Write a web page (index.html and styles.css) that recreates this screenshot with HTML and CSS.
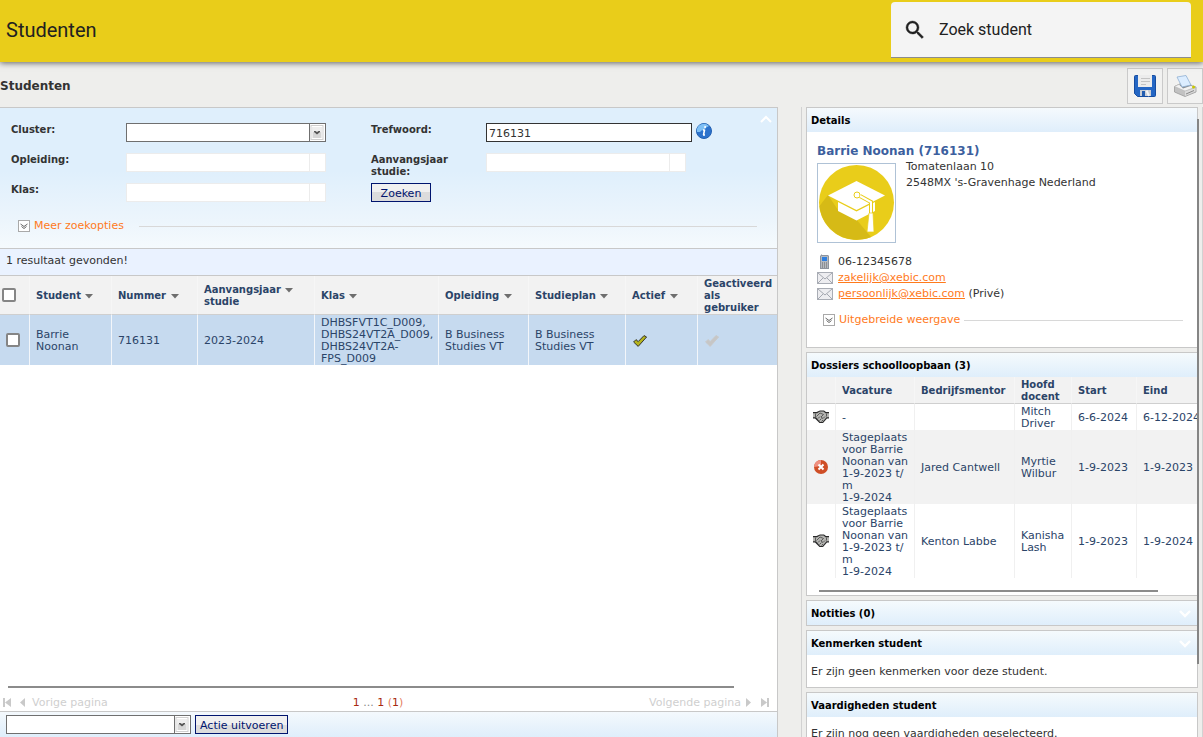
FILE: index.html
```html
<!DOCTYPE html>
<html lang="nl">
<head>
<meta charset="utf-8">
<title>Studenten</title>
<link rel="stylesheet" href="styles.css">
</head>
<body>
<svg class="sprite" aria-hidden="true">
  <symbol id="dbl-chevron" viewBox="0 0 12 12"><rect x=".5" y=".5" width="11" height="11" fill="#fff" stroke="#a9a9a9"/><path d="M2.500 4l3.500 2.500L9.500 4M3.500 6.500L6 8.500l2.500-2" fill="none" stroke="#555" stroke-width=".9"/></symbol>
  <symbol id="select-arrow" viewBox="0 0 14 16"><rect x="1" y="1.500" width="12" height="14" fill="#fff" stroke="#cfcfcf"/><rect x="2.500" y="3" width="9" height="11" fill="#d6d6d6"/><rect x="2.500" y="3" width="9" height="5" fill="#eee"/><path d="M4 7h1.500L7 8l1.500-1H10v1L7 10.500 4 8z" fill="#555"/></symbol>
  <symbol id="sort" viewBox="0 0 8 5"><path d="M0 0h8L4 4.500z" fill="#6e6e6e"/></symbol>
  <symbol id="chev-up" viewBox="0 0 12 8"><path d="M1 7l5-5 5 5" fill="none" stroke="#fff" stroke-width="2"/></symbol>
  <symbol id="chev-down" viewBox="0 0 12 8"><path d="M1 1l5 5 5-5" fill="none" stroke="#fff" stroke-width="2.400"/></symbol>
  <symbol id="check" viewBox="0 0 14 12"><path d="M.6 7l2.400-2.400 2.200 2 5.800-6 2.600 1.400-8.400 9.400z"/></symbol>
  <symbol id="mail" viewBox="0 0 16 12"><rect x=".5" y=".5" width="15" height="11" fill="#ededf0" stroke="#a9adb5"/><path d="M1 1l7 6 7-6M1 11l5-5M15 11l-5-5" fill="none" stroke="#a4a8b0"/></symbol>
  <symbol id="hands" viewBox="0 0 16 14"><path d="M0 2h3.500L7 .5h4L13 2h3v6.500h-2L10 13H6.500L2 8.500H0z" fill="#2a2a2a"/><path d="M0 3.200h4L7 1.500h3.500L12.500 3.200H16v4h-2.500L9.500 12H7L3 7.200H0z" fill="#b5b5b2"/><path d="M3.500 6.500L7 3l3.500 1.500-2.500 2.500 2 1.500 2-2M5 8.500l2-2M6.500 10.500l2-2M8.500 11.500l1.500-1.500M2.500 3.500v3.500M13.500 3.500v3" fill="none" stroke="#444" stroke-width=".8"/></symbol>
</svg>

<header class="topbar">
  <h1 class="topbar-title">Studenten</h1>
  <label class="quick-search">
    <svg width="24" height="24" viewBox="0 0 24 24" aria-hidden="true"><path fill="#212121" stroke="#212121" stroke-width=".4" d="M15.500 14h-.79l-.28-.27A6.471 6.471 0 0 0 16 9.500 6.500 6.500 0 1 0 9.500 16c1.610 0 3.090-.59 4.230-1.570l.27.28v.79l5 4.990L20.490 19l-4.990-5zm-6 0C7.010 14 5 11.990 5 9.500S7.010 5 9.500 5 14 7.010 14 9.500 11.990 14 9.500 14z"/></svg>
    <input type="text" placeholder="Zoek student" aria-label="Zoek student">
  </label>
</header>

<div class="toolbar">
  <h2 class="page-title">Studenten</h2>
  <button class="tool" type="button" aria-label="Opslaan">
    <svg width="24" height="24" viewBox="0 0 24 24"><path d="M1.500 2.500q0-1 1-1h19q1 0 1 1v19q0 1-1 1h-17l-3-3z" fill="#2466c4" stroke="#174da0"/><path d="M5 1h14v12H5z" fill="#ececec"/><path d="M8 4.500h9M8 7.500h9M8 10.500h5" stroke="#c4c4c4"/><path d="M7 16h11v6H7z" fill="#c9ced6"/><path d="M9 17h3v5H9z" fill="#235db0"/><path d="M13.500 16.500l2.500 5.500" stroke="#f4f4f4" stroke-width="2"/></svg>
  </button>
  <button class="tool" type="button" aria-label="Afdrukken">
    <svg width="24" height="24" viewBox="0 0 24 24"><path d="M1.500 12.500L9 9l14 4v5l-11 4.500-10.500-4.500z" fill="#c2c2c2" stroke="#9a9a9a" stroke-width=".8"/><path d="M1.500 12.500L9 9l14 4-11 4z" fill="#f3f3f3" stroke="#b5b5b5" stroke-width=".6"/><path d="M6 10.500l10-1.500 3 2.500-9 3z" fill="#8b8f94"/><path d="M4 3l9-1.500 5 9.500-9 2z" fill="#dcedff" stroke="#8fb0d3" stroke-width=".8"/><path d="M12 17.500v4.500l10.500-4.500V14z" fill="#dcdcdc"/><path d="M13 20l8-3.500" stroke="#888"/><circle cx="20.500" cy="13" r="1.500" fill="#c9c800"/></svg>
  </button>
</div>

<div class="workspace">
  <main class="results">
    <form class="filters">
      <button class="collapse" type="button" aria-label="Inklappen"><svg width="12" height="8"><use href="#chev-up"/></svg></button>
      <div class="filter-grid">
        <label for="cluster">Cluster:</label>
        <div class="combo"><select id="cluster"><option></option></select><span class="arrow"><svg width="14" height="16"><use href="#select-arrow"/></svg></span></div>
        <label for="trefwoord">Trefwoord:</label>
        <div class="keyword"><input id="trefwoord" type="text" value="716131">
          <svg width="16" height="16" viewBox="0 0 16 16" aria-hidden="true"><circle cx="8" cy="8" r="7.500" fill="#2c72cc" stroke="#2260b2"/><path d="M1 9a7 7 0 0 1 12-6Q10 4 8 7 5 7 4 9z" fill="#7fc0f5"/><path d="M9.300 3l-.4 2M8.600 6.500L7.500 12M7 7h1.500M7 12h2" stroke="#fff" stroke-width="1.600"/></svg></div>
        <label for="opleiding">Opleiding:</label>
        <div class="combo off"><select id="opleiding" disabled><option></option></select><span class="arrow"></span></div>
        <label for="jaar">Aanvangsjaar studie:</label>
        <div class="combo off"><select id="jaar" disabled><option></option></select><span class="arrow"></span></div>
        <label for="klas">Klas:</label>
        <div class="combo off"><select id="klas" disabled><option></option></select><span class="arrow"></span></div>
        <button class="btn" type="button">Zoeken</button>
      </div>
      <div class="more">
        <svg width="12" height="12"><use href="#dbl-chevron"/></svg><a href="#meer">Meer zoekopties</a><span class="rule"></span>
      </div>
    </form>
    <p class="count">1 resultaat gevonden!</p>
    <table class="students">
      <colgroup><col class="c-check"><col class="c-student"><col class="c-number"><col class="c-year"><col class="c-class"><col class="c-course"><col class="c-plan"><col class="c-active"><col></colgroup>
      <thead><tr>
        <th class="pick head"><input type="checkbox" aria-label="Alles selecteren"></th>
        <th>Student <svg width="8" height="5"><use href="#sort"/></svg></th>
        <th>Nummer <svg width="8" height="5"><use href="#sort"/></svg></th>
        <th>Aanvangsjaar <svg width="8" height="5"><use href="#sort"/></svg><br>studie</th>
        <th>Klas <svg width="8" height="5"><use href="#sort"/></svg></th>
        <th>Opleiding <svg width="8" height="5"><use href="#sort"/></svg></th>
        <th>Studieplan <svg width="8" height="5"><use href="#sort"/></svg></th>
        <th>Actief <svg width="8" height="5"><use href="#sort"/></svg></th>
        <th>Geactiveerd<br>als<br>gebruiker</th>
      </tr></thead>
      <tbody><tr>
        <td class="pick"><input type="checkbox" aria-label="Barrie Noonan selecteren"></td>
        <td>Barrie<br>Noonan</td><td>716131</td><td>2023-2024</td>
        <td>DHBSFVT1C_D009,<br>DHBS24VT2A_D009,<br>DHBS24VT2A-<br>FPS_D009</td>
        <td>B Business<br>Studies VT</td><td>B Business<br>Studies VT</td>
        <td><svg class="check-on" width="14" height="12"><use href="#check"/></svg></td>
        <td><svg class="check-off" width="14" height="12"><use href="#check"/></svg></td>
      </tr></tbody>
    </table>
    <div class="results-end">
      <div class="hscroll"></div>
      <nav class="pager">
        <span class="prev"><svg width="8" height="9" viewBox="0 0 8 9"><path d="M0 0h2v9H0zM8 0v9L2 4.500z" fill="#c9c9c9"/></svg><svg width="5" height="9" viewBox="0 0 5 9"><path d="M5 0v9L0 4.500z" fill="#c9c9c9"/></svg>Vorige pagina</span>
        <span class="pages"><b>1</b> ... <b>1</b> <i>(</i><b>1</b><i>)</i></span>
        <span class="next">Volgende pagina<svg width="5" height="9" viewBox="0 0 5 9"><path d="M0 0v9l5-4.500z" fill="#c9c9c9"/></svg><svg class="last" width="8" height="9" viewBox="0 0 8 9"><path d="M6 0h2v9H6zM0 0v9l6-4.500z" fill="#c9c9c9"/></svg></span>
      </nav>
      <form class="actions">
        <div class="combo"><select aria-label="Actie"><option></option></select><span class="arrow"><svg width="14" height="16"><use href="#select-arrow"/></svg></span></div>
        <button class="btn" type="button">Actie uitvoeren</button>
      </form>
    </div>
  </main>

  <aside class="side">
    <section class="panel details">
      <h3>Details</h3>
      <div class="detail-body">
        <h4>Barrie Noonan (716131)</h4>
        <div class="identity">
          <svg class="photo" width="79" height="80" viewBox="0 0 79 80" role="img" aria-label="Afstudeerhoed"><rect x=".5" y=".5" width="78" height="79" fill="#fff" stroke="#afc2d6"/><circle cx="39.500" cy="39.500" r="37.500" fill="#e9cd1a"/><path d="M11 32L2.500 43A37.500 37.500 0 0 0 54 74L39 56 21 47z" fill="#d6ba16"/><path d="M39.500 18L68 32.500 39.500 47 11 32.500z" fill="#fff"/><path d="M21 39l18.500 9.500L58 39v9L39.500 57.500 21 48z" fill="#fff"/><path d="M43 33l11 6v11" fill="none" stroke="#e9cd1a" stroke-width="4"/><circle cx="40" cy="32" r="3" fill="#fff" stroke="#e9cd1a"/><path d="M43 33l11 6v11" fill="none" stroke="#fff" stroke-width="2"/><path d="M52 50h4l1 19h-7z" fill="#fff" stroke="#e9cd1a" stroke-width=".7"/></svg>
          <p>Tomatenlaan 10<br>2548MX 's-Gravenhage Nederland</p>
        </div>
        <ul class="contact">
          <li><svg width="16" height="16" viewBox="0 0 16 16"><path d="M4 1l1-1v1h6l1 1v13H3V2z" fill="#8d949e"/><path d="M4 2h7v12H4z" fill="#b4b9c0"/><path d="M5 3h5v4H5z" fill="#2e7fe0"/><path d="M5 9h6M5 11h6M5 13h6" stroke="#666" stroke-dasharray="1 1"/></svg>06-12345678</li>
          <li><svg width="16" height="12"><use href="#mail"/></svg><a href="mailto:zakelijk@xebic.com">zakelijk@xebic.com</a></li>
          <li><svg width="16" height="12"><use href="#mail"/></svg><a href="mailto:persoonlijk@xebic.com">persoonlijk@xebic.com</a>&nbsp;(Privé)</li>
        </ul>
        <div class="more"><svg width="12" height="12"><use href="#dbl-chevron"/></svg><a href="#uitgebreid">Uitgebreide weergave</a><span class="rule"></span></div>
      </div>
    </section>

    <section class="panel">
      <h3>Dossiers schoolloopbaan (3)</h3>
      <div class="clip">
      <table class="files">
        <colgroup><col class="f-icon"><col class="f-job"><col class="f-mentor"><col class="f-teacher"><col class="f-start"><col class="f-end"></colgroup>
        <thead><tr><th></th><th>Vacature</th><th>Bedrijfsmentor</th><th>Hoofd docent</th><th>Start</th><th>Eind</th></tr></thead>
        <tbody>
          <tr><td class="ico"><svg width="16" height="14"><use href="#hands"/></svg></td><td>-</td><td></td><td>Mitch<br>Driver</td><td>6-6-2024</td><td>6-12-2024</td></tr>
          <tr><td class="ico"><svg width="16" height="16" viewBox="0 0 16 16"><circle cx="8" cy="8" r="7" fill="#cf4e26"/><path d="M1 8a7 7 0 0 1 7-7v6z" fill="#f09080"/><path d="M5.500 5.500l5 5M10.500 5.500l-5 5" stroke="#fff" stroke-width="2"/></svg></td><td>Stageplaats<br>voor Barrie<br>Noonan van<br>1-9-2023 t/<br>m<br>1-9-2024</td><td>Jared Cantwell</td><td>Myrtie<br>Wilbur</td><td>1-9-2023</td><td>1-9-2023</td></tr>
          <tr><td class="ico"><svg width="16" height="14"><use href="#hands"/></svg></td><td>Stageplaats<br>voor Barrie<br>Noonan van<br>1-9-2023 t/<br>m<br>1-9-2024</td><td>Kenton Labbe</td><td>Kanisha<br>Lash</td><td>1-9-2023</td><td>1-9-2024</td></tr>
        </tbody>
      </table>
      </div>
      <div class="hscroll"></div>
    </section>

    <section class="panel"><h3>Notities (0)<svg width="12" height="8"><use href="#chev-down"/></svg></h3></section>
    <section class="panel"><h3>Kenmerken student<svg width="12" height="8"><use href="#chev-down"/></svg></h3><p class="note">Er zijn geen kenmerken voor deze student.</p></section>
    <section class="panel"><h3>Vaardigheden student</h3><p class="note">Er zijn nog geen vaardigheden geselecteerd.</p></section>
    <div class="vscroll"></div>
  </aside>
</div>
</body>
</html>
```

FILE: styles.css
```css
* { box-sizing: border-box; }
body {
  margin: 0;
  height: 100vh;
  display: flex;
  flex-direction: column;
  overflow: hidden;
  background: #eeeeec;
  color: #333;
  font: 11px/12px "DejaVu Sans", Verdana, sans-serif;
}
h1, h2, h3, h4, p, ul { margin: 0; padding: 0; }
svg { flex: none; }
button, input, select { font: inherit; margin: 0; }
a { color: #ff7a1c; }
.sprite { display: none; }

.topbar {
  flex: none;
  display: flex;
  align-items: flex-start;
  justify-content: space-between;
  height: 62px;
  padding: 2px 12px 0 6px;
  background: #e9cd1a;
  box-shadow: 0 1px 6px rgba(0, 0, 0, .6);
  position: relative;
}
.topbar-title { font: 400 20px/56px Roboto, sans-serif; color: #212121; }
.quick-search {
  display: flex;
  align-items: center;
  gap: 12px;
  width: 300px;
  height: 56px;
  padding: 1px 12px 0;
  background: #f4f4f4;
  border-bottom: 1px solid #8c8c8c;
  border-radius: 4px 4px 0 0;
}
.quick-search input {
  flex: 1;
  min-width: 0;
  padding: 0;
  border: 0;
  background: none;
  font: 16px/24px Roboto, sans-serif;
  color: #212121;
}
.quick-search input::placeholder { color: #212121; opacity: 1; }

.toolbar { flex: none; display: flex; align-items: center; gap: 4px; height: 45px; padding-top: 2px; }
.page-title { flex: 1; font-size: 12px; line-height: 16px; }
.tool { width: 36px; height: 36px; padding: 5px; border: 1px solid #cacaca; background: #f2f2f1; }
.tool svg { display: block; }

.workspace { flex: 1; min-height: 0; display: flex; gap: 23px; }

.results {
  flex: 1;
  min-width: 0;
  display: flex;
  flex-direction: column;
  background: #fff;
  border-top: 1px solid #c8c8c8;
  border-right: 1px solid #c8c8c8;
}
.filters {
  position: relative;
  height: 141px;
  padding: 15px 20px 0 11px;
  background: linear-gradient(#dfeffc 45%, #ecf5fc 80%, #f5fafd);
  border-bottom: 1px solid #c8c8c8;
}
.collapse { position: absolute; top: 7px; right: 5px; padding: 0; border: 0; background: none; }
.collapse svg { display: block; }
.filter-grid {
  display: grid;
  grid-template-columns: 115px 245px 115px 1fr;
  grid-auto-rows: 30px;
  align-items: start;
}
.filter-grid label { padding-top: 1px; max-width: 90px; font-weight: bold; font-size: 10px; }
.combo { position: relative; width: 200px; height: 19px; border: 1px solid #6f6f6f; background: #fff; }
.combo select { display: block; width: 100%; height: 100%; border: 0; background: none; appearance: none; padding: 0 20px 0 4px; }
.combo .arrow {
  position: absolute;
  top: 0;
  right: 0;
  width: 16px;
  height: 17px;
  border-left: 1px solid #6f6f6f;
  pointer-events: none;
}
.combo .arrow svg { display: block; }
.combo.off, .combo.off .arrow { border-color: #ececec; }
.keyword { display: flex; gap: 4px; }
.keyword input { width: 206px; height: 19px; padding: 2px 2px 0; border: 1px solid #333; background: #fff; color: #333; }
.btn {
  height: 19px;
  padding: 2px 4px 0;
  border: 1px solid #00146e;
  background: linear-gradient(#f0f0f0 50%, #dcdcdc 50%);
  color: #00146e;
}
.filter-grid .btn { width: 60px; }
.more { display: flex; align-items: center; gap: 4px; }
.more a { text-decoration: none; }
.more .rule { flex: 1; height: 1px; background: #d8d8d8; }
.filters .more { padding: 7px 0 0 7px; }
.filters .rule { margin-left: 11px; }

.count { height: 27px; padding: 6px; background: #eaf2ff; border-bottom: 1px solid #c8c8c8; }

table { border-collapse: separate; border-spacing: 0; table-layout: fixed; color: #2b4468; }
th, td { padding: 0 4px 0 6px; text-align: left; vertical-align: middle; }
th { font-size: 10px; }
.students { width: 100%; }
.students th { height: 39px; padding-top: 1px; padding-right: 0; background: #f2f2f2; border-bottom: 1px solid #cfcfcf; border-right: 1px solid #f6f6f6; white-space: nowrap; }
.students td { height: 50px; padding-top: 1px; background: #c6daef; border-right: 1px solid #f3f6fa; white-space: nowrap; }
.students th:last-child, .students td:last-child { border-right: 0; }
.students th svg { margin-left: 1px; }
.students input { display: block; width: 14px; height: 14px; appearance: none; background: #fff; border: 2px solid #858585; border-radius: 2px; }
.students .pick { padding: 0 0 0 6px; }
.students .pick.head { padding-left: 2px; }
.c-check { width: 30px; }
.c-student { width: 82px; }
.c-number { width: 86px; }
.c-year { width: 117px; }
.c-class { width: 124px; }
.c-course { width: 90px; }
.c-plan { width: 97px; }
.c-active { width: 72px; }
.students td svg { display: block; margin-left: 1px; }
.check-on { fill: #b5b41c; stroke: #333; }
.check-off { fill: #c6c6c6; stroke: #c9c9c9; }

.hscroll { height: 2px; background: #8b8b8b; }
.results-end { margin-top: auto; }
.results-end .hscroll { margin: 0 43px 0 8px; }
.pager { display: flex; align-items: center; justify-content: space-between; height: 23px; padding: 6px 8px 0 3px; color: #cfcfcf; }
.pager span { display: flex; align-items: center; gap: 5px; white-space: nowrap; }
.pager .prev { flex: 1; gap: 7px; }
.pager .prev svg + svg { margin-left: 2px; }
.pager .pages { display: block; padding-right: 16px; color: #888; }
.pager b { font-weight: 400; color: #a82a10; }
.pager i { font-style: normal; color: #e5805f; }
.pager .next { flex: 1; justify-content: flex-end; }
.pager .last { margin-left: 5px; }
.actions { display: flex; align-items: center; gap: 4px; height: 26px; padding-left: 6px; border-top: 1px solid #c8c8c8; background: linear-gradient(#f4f9fd, #dfeefb); }
.actions .combo { width: 185px; }

.side {
  position: relative;
  flex: none;
  width: 402px;
  display: flex;
  flex-direction: column;
  gap: 4px;
  padding: 0 4px;
  border-left: 1px solid #d2d2d2;
  border-right: 1px solid #d2d2d2;
  overflow: hidden;
}
.panel { flex: none; background: #fff; border: 1px solid #c8c8c8; }
.panel h3 {
  display: flex;
  align-items: center;
  justify-content: space-between;
  height: 24px;
  padding: 1px 6px 0 4px;
  background: linear-gradient(#f5fafd, #dfeefb);
  color: #000;
  font-size: 10px;
}
.detail-body { padding: 11px 14px 19px 10px; line-height: 16px; }
.detail-body h4 { font-size: 12px; line-height: 16px; color: #3c5f9e; }
.identity { display: flex; gap: 10px; margin-top: 4px; }
.identity p { margin-top: -4px; }
.contact { list-style: none; margin-top: 11px; }
.contact li { display: flex; align-items: center; height: 16px; }
.contact svg { margin-right: 5px; }
.detail-body .more { padding-left: 6px; margin-top: 10px; }

.clip { overflow: hidden; }
.files { width: 400px; }
.files th { height: 27px; padding-top: 2px; background: #f2f2f2; border-bottom: 1px solid #cfcfcf; border-right: 1px solid #f6f6f6; }
.files td { height: 26px; padding-top: 2px; border-right: 1px solid #f0f0f0; white-space: nowrap; }
.files tr:nth-child(2) td { background: #f2f2f2; }
.files .ico { padding: 0 0 0 6px; }
.ico svg { display: block; }
.f-icon { width: 29px; }
.f-job { width: 79px; }
.f-mentor { width: 100px; }
.f-teacher { width: 57px; }
.f-start { width: 65px; }
.panel > .hscroll { margin: 12px 39px 3px 12px; }
.note { padding: 11px 4px 9px; }
.vscroll { position: absolute; top: 12px; right: 3px; width: 2px; height: 545px; background: #858585; }
```
